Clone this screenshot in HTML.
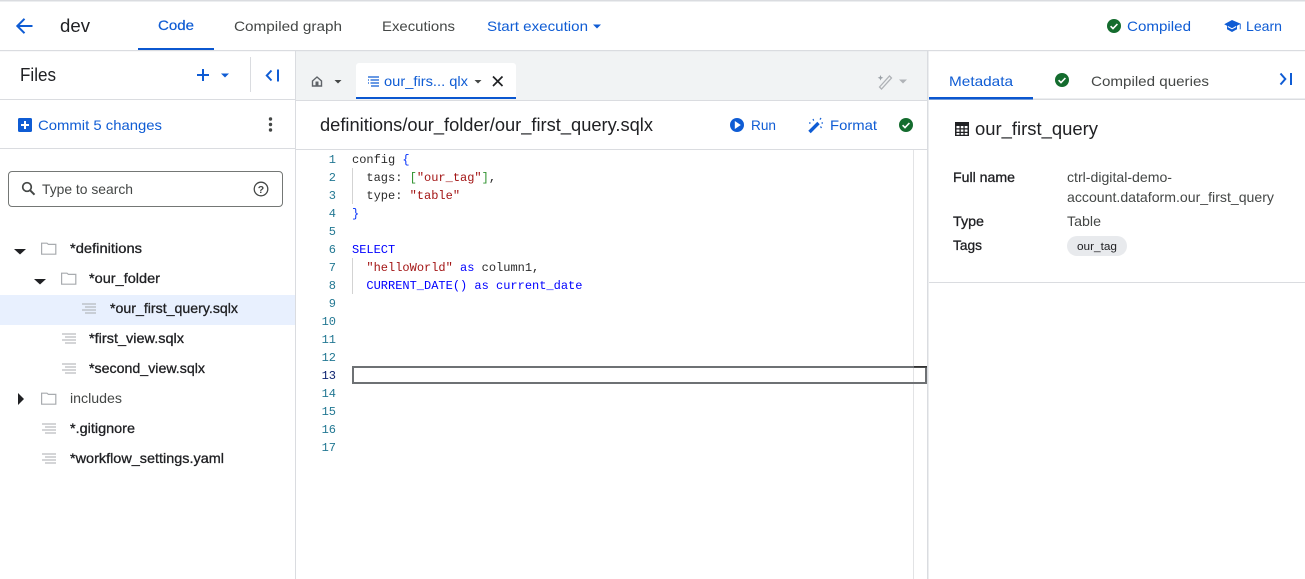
<!DOCTYPE html>
<html><head><meta charset="utf-8"><style>
html,body{margin:0;padding:0;background:#fff;width:1305px;height:579px;overflow:hidden}
svg{display:block}
text{font-family:"Liberation Sans",sans-serif;font-size:14px;fill:#202124;white-space:pre}
.b{fill:#0f5cd4}.g{fill:#444746}
.m{stroke:#202124;stroke-width:.3}
.c{font-family:"Liberation Mono",monospace;font-size:12px;fill:#2b2b2b}
.n{font-family:"Liberation Mono",monospace;font-size:12px;fill:#237893;text-anchor:end}
.kw{fill:#0000ff}.st{fill:#a31515}.br{fill:#0431fa}.br2{fill:#319331}
.fi{fill:none;stroke:#a8abaf;stroke-width:1.2}
</style></head><body>
<svg width="1305" height="579" viewBox="0 0 1305 579" xmlns="http://www.w3.org/2000/svg">
<defs>
<g id="fold"><path d="M.6 1.200H6l1.400 1.200h7.400v9.800H.6z" class="fi"/></g>
<g id="file"><path d="M0 1h14M3 4h11M0 7h14M3 10h11" stroke="#a8abaf" stroke-width="1.100" fill="none"/></g>
<g id="chk"><circle cx="0" cy="0" r="7" fill="#146c2e"/><path d="M-3.400 .2l2.400 2.400 4.400-4.600" stroke="#fff" stroke-width="1.600" fill="none"/></g>
</defs>

<!-- frame -->
<rect x="0" y="0" width="1305" height="1.500" fill="#dadce0"/>
<rect x="296" y="51" width="632" height="49" fill="#f1f3f4"/>
<rect x="0" y="50" width="1305" height="1.200" fill="#dadce0"/>
<rect x="295" y="51" width="1" height="528" fill="#dadce0"/>
<rect x="927" y="51" width="1.500" height="528" fill="#dadce0"/>
<rect x="0" y="99" width="295" height="1" fill="#dadce0"/>
<rect x="0" y="148" width="295" height="1" fill="#dadce0"/>
<rect x="296" y="100" width="631" height="1" fill="#dadce0"/>
<rect x="296" y="149" width="631" height="1" fill="#dadce0"/>
<rect x="913" y="150" width="1" height="429" fill="#e2e3e5"/>
<rect x="929" y="98.500" width="376" height="1.500" fill="#dadce0"/>
<rect x="929" y="282" width="376" height="1" fill="#dadce0"/>

<!-- top bar -->
<path d="M32.500 26H17.500M24.500 18.800L17.300 26l7.200 7.200" stroke="#0f5cd4" stroke-width="2" fill="none"/>
<text x="60" y="32" style="font-size:18px" textLength="30" lengthAdjust="spacingAndGlyphs">dev</text>
<text x="158" y="30" class="b" stroke="#0f5cd4" stroke-width=".2" textLength="36" lengthAdjust="spacingAndGlyphs">Code</text>
<rect x="138" y="48" width="76" height="2" fill="#0b57d0"/>
<text x="234" y="31" class="g" textLength="108" lengthAdjust="spacingAndGlyphs">Compiled graph</text>
<text x="382" y="31" class="g" textLength="73" lengthAdjust="spacingAndGlyphs">Executions</text>
<text x="487" y="31" class="b" textLength="101" lengthAdjust="spacingAndGlyphs">Start execution</text>
<path d="M593 24.500h8l-4 4z" fill="#0f5cd4"/>
<use href="#chk" x="1114" y="26"/>
<text x="1127" y="31" class="b" textLength="64" lengthAdjust="spacingAndGlyphs">Compiled</text>
<path d="M1232 20l-7.800 4.200 2.800 1.500v3.600l5 2.700 5-2.700v-3.600l2.800-1.500v5h.9v-5.500z" fill="#0f5cd4"/><path d="M1227.800 26.500l4.200 2.300 4.200-2.300" stroke="#fff" stroke-width="1" fill="none"/>
<text x="1246" y="31" class="b" textLength="36" lengthAdjust="spacingAndGlyphs">Learn</text>

<!-- sidebar header -->
<text x="20" y="81" style="font-size:18px" textLength="36" lengthAdjust="spacingAndGlyphs">Files</text>
<path d="M203 69v12M197 75h12" stroke="#0f5cd4" stroke-width="2" fill="none"/>
<path d="M221 73.500h8l-4 4z" fill="#0f5cd4"/>
<rect x="250" y="57" width="1" height="35" fill="#dadce0"/>
<path d="M271.500 70.500L266.800 75.500l4.700 5M278 69.500v12" stroke="#0f5cd4" stroke-width="2" fill="none"/>

<!-- commit -->
<rect x="18" y="118" width="14" height="14" rx="1.500" fill="#0f5cd4"/>
<path d="M25 121v8M21 125h8" stroke="#fff" stroke-width="2"/>
<text x="38" y="130" class="b" textLength="124" lengthAdjust="spacingAndGlyphs">Commit 5 changes</text>
<circle cx="270.500" cy="119" r="1.700" fill="#444746"/><circle cx="270.500" cy="124.500" r="1.700" fill="#444746"/><circle cx="270.500" cy="130" r="1.700" fill="#444746"/>

<!-- search -->
<rect x="8.500" y="171.500" width="274" height="35" rx="3.500" fill="#fff" stroke="#747775"/>
<circle cx="27" cy="187" r="4.300" fill="none" stroke="#444746" stroke-width="1.700"/><path d="M30 190.200l4.500 4.500" stroke="#444746" stroke-width="2"/>
<text x="42" y="194" class="g" textLength="91" lengthAdjust="spacingAndGlyphs">Type to search</text>
<circle cx="261" cy="189" r="6.800" fill="none" stroke="#444746" stroke-width="1.300"/>
<text x="261" y="193" text-anchor="middle" class="g" style="font-size:10.500px;font-weight:bold">?</text>

<!-- tree -->
<rect x="0" y="295" width="295" height="30" fill="#e8f0fe"/>
<path d="M14 249h12l-6 5.500z" fill="#202124"/>
<use href="#fold" x="41" y="242"/>
<text x="70" y="253" class="m" textLength="72" lengthAdjust="spacingAndGlyphs">*definitions</text>
<path d="M34 279h12l-6 5.500z" fill="#202124"/>
<use href="#fold" x="61" y="272"/>
<text x="89" y="283" class="m" textLength="71" lengthAdjust="spacingAndGlyphs">*our_folder</text>
<use href="#file" x="82" y="303"/>
<text x="110" y="313" class="m" textLength="128" lengthAdjust="spacingAndGlyphs">*our_first_query.sqlx</text>
<use href="#file" x="62" y="333"/>
<text x="89" y="343" class="m" textLength="95" lengthAdjust="spacingAndGlyphs">*first_view.sqlx</text>
<use href="#file" x="62" y="363"/>
<text x="89" y="373" class="m" textLength="116" lengthAdjust="spacingAndGlyphs">*second_view.sqlx</text>
<path d="M18 393l6 6-6 6z" fill="#202124"/>
<use href="#fold" x="41" y="392"/>
<text x="70" y="403" class="g" textLength="52" lengthAdjust="spacingAndGlyphs">includes</text>
<use href="#file" x="42" y="423"/>
<text x="70" y="433" class="m" textLength="65" lengthAdjust="spacingAndGlyphs">*.gitignore</text>
<use href="#file" x="42" y="453"/>
<text x="70" y="463" class="m" textLength="154" lengthAdjust="spacingAndGlyphs">*workflow_settings.yaml</text>

<!-- tab bar -->
<path d="M312.500 81l4.500-4 4.500 4v5h-9z" fill="none" stroke="#5f6368" stroke-width="1.400"/><rect x="315.500" y="81.500" width="3" height="4.500" fill="#5f6368"/>
<path d="M334.500 80h7l-3.500 3.500z" fill="#444746"/>
<path d="M356 98V66a3 3 0 0 1 3-3h154a3 3 0 0 1 3 3v32z" fill="#fff"/>
<rect x="356" y="97" width="160" height="2" fill="#0b57d0"/>
<path d="M368 77h11M370.500 80h8.500M368 80h1M370.500 83h8.500M368 83h1M371 86h8" stroke="#0f5cd4" stroke-width="1.300" fill="none"/>
<text x="384" y="86" class="b" textLength="84" lengthAdjust="spacingAndGlyphs">our_firs... qlx</text>
<path d="M474.500 80h7l-3.500 3.500z" fill="#444746"/>
<path d="M493 76.500l9.500 9.500M502.500 76.500l-9.500 9.500" stroke="#202124" stroke-width="1.700" fill="none"/>
<path d="M880 88l10-11 2 2-10 11z" fill="none" stroke="#b0b3b7" stroke-width="1.300" transform="translate(-.5 -1)"/>
<path d="M880.500 75l.8 2 2 .8-2 .8-.8 2-.8-2-2-.8 2-.8z" fill="#9aa0a6"/>
<path d="M899 79.500h8l-4 4z" fill="#b0b3b7"/>

<!-- editor header -->
<text x="320" y="131" style="font-size:18px" textLength="333" lengthAdjust="spacingAndGlyphs">definitions/our_folder/our_first_query.sqlx</text>
<circle cx="737" cy="125" r="7" fill="#0f5cd4"/><path d="M734.800 121v8l6-4z" fill="#fff"/>
<text x="751" y="130" class="b" textLength="25" lengthAdjust="spacingAndGlyphs">Run</text>
<path d="M809.500 132l9-9" stroke="#0f5cd4" stroke-width="3.400"/>
<path d="M813 119l.7 1.600M809 123h1.600M821 118l-1 1.600M821.500 128l-1-1.500M823 123h-1.500" stroke="#0f5cd4" stroke-width="1.200" fill="none"/>
<text x="830" y="130" class="b" textLength="47" lengthAdjust="spacingAndGlyphs">Format</text>
<use href="#chk" x="906" y="125"/>

<!-- code -->
<g transform="translate(0 -.8)">
<text class="n" x="336" y="164">1</text><text class="n" x="336" y="182">2</text><text class="n" x="336" y="200">3</text><text class="n" x="336" y="218">4</text><text class="n" x="336" y="236">5</text><text class="n" x="336" y="254">6</text><text class="n" x="336" y="272">7</text><text class="n" x="336" y="290">8</text><text class="n" x="336" y="308">9</text><text class="n" x="336" y="326">10</text><text class="n" x="336" y="344">11</text><text class="n" x="336" y="362">12</text><text class="n" x="336" y="380" style="fill:#0b216f">13</text><text class="n" x="336" y="398">14</text><text class="n" x="336" y="416">15</text><text class="n" x="336" y="434">16</text><text class="n" x="336" y="452">17</text>
<text class="c" x="352" y="164">config <tspan class="br">{</tspan></text>
<text class="c" x="352" y="182">  tags: <tspan class="br2">[</tspan><tspan class="st">"our_tag"</tspan><tspan class="br2">]</tspan>,</text>
<text class="c" x="352" y="200">  type: <tspan class="st">"table"</tspan></text>
<text class="c br" x="352" y="218">}</text>
<text class="c kw" x="352" y="254">SELECT</text>
<text class="c" x="352" y="272">  <tspan class="st">"helloWorld"</tspan> <tspan class="kw">as</tspan> column1,</text>
<text class="c kw" x="352" y="290">  CURRENT_DATE() as current_date</text>
</g>
<rect x="352" y="168" width="1" height="36" fill="#d3d3d3"/>
<rect x="352" y="258" width="1" height="36" fill="#d3d3d3"/>
<rect x="353" y="367" width="573" height="16" fill="none" stroke="#6e7174" stroke-width="2"/>
<rect x="914" y="366" width="13" height="1.600" fill="#333"/>

<!-- right panel -->
<text x="949" y="86" class="b" textLength="64" lengthAdjust="spacingAndGlyphs">Metadata</text>
<rect x="929" y="97" width="104" height="2.500" fill="#0b57d0"/>
<use href="#chk" x="1062" y="80"/>
<text x="1091" y="86" class="g" textLength="118" lengthAdjust="spacingAndGlyphs">Compiled queries</text>
<path d="M1280.500 73.500l4.800 5.500-4.800 5.500M1291 73v12" stroke="#0f5cd4" stroke-width="2" fill="none"/>

<rect x="955" y="122" width="14" height="14" fill="#202124"/>
<path d="M956.500 126h3v2.200h-3zM960.800 126h2.600v2.200h-2.600zM964.700 126h2.800v2.200h-2.800zM956.500 129.500h3v2.200h-3zM960.800 129.500h2.600v2.200h-2.600zM964.700 129.500h2.800v2.200h-2.800zM956.500 133h3v1.700h-3zM960.800 133h2.600v1.700h-2.600zM964.700 133h2.800v1.700h-2.800z" fill="#fff"/>
<text x="975" y="135" style="font-size:18px" textLength="123" lengthAdjust="spacingAndGlyphs">our_first_query</text>
<text x="953" y="182" class="m" textLength="62" lengthAdjust="spacingAndGlyphs">Full name</text>
<text x="1067" y="182" class="g" textLength="105" lengthAdjust="spacingAndGlyphs">ctrl-digital-demo-</text>
<text x="1067" y="202" class="g" textLength="207" lengthAdjust="spacingAndGlyphs">account.dataform.our_first_query</text>
<text x="953" y="226" class="m" textLength="31" lengthAdjust="spacingAndGlyphs">Type</text>
<text x="1067" y="226" class="g" textLength="34" lengthAdjust="spacingAndGlyphs">Table</text>
<text x="953" y="250" class="m" textLength="29" lengthAdjust="spacingAndGlyphs">Tags</text>
<rect x="1067" y="236" width="60" height="20" rx="10" fill="#e8eaed"/>
<text x="1077" y="250" style="font-size:11px" textLength="40" lengthAdjust="spacingAndGlyphs">our_tag</text>
</svg>
</body></html>
